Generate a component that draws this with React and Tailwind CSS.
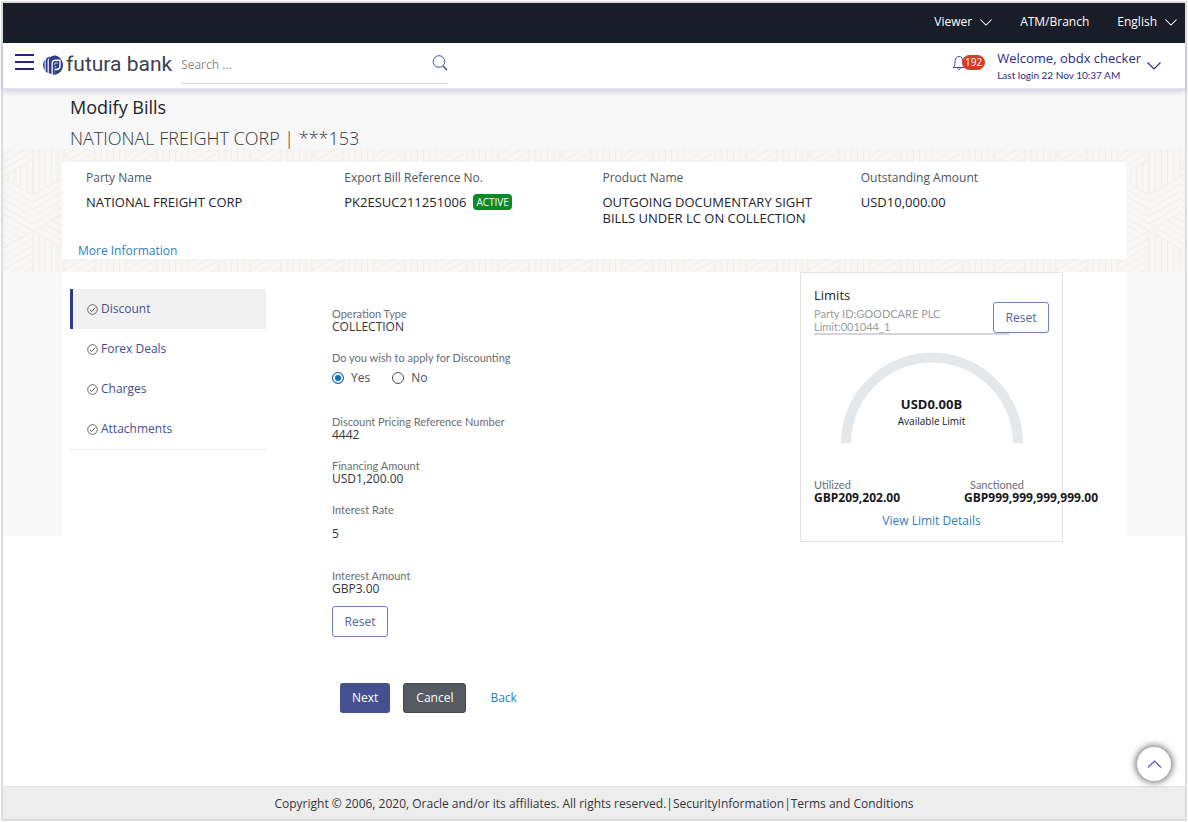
import React, { useState } from 'react';

const billFields = [
  { label: 'Party Name', value: 'NATIONAL FREIGHT CORP' },
  { label: 'Export Bill Reference No.', value: 'PK2ESUC211251006', status: 'ACTIVE' },
  { label: 'Product Name', value: 'OUTGOING DOCUMENTARY SIGHT BILLS UNDER LC ON COLLECTION' },
  { label: 'Outstanding Amount', value: 'USD10,000.00' },
];

const tabs = ['Discount', 'Forex Deals', 'Charges', 'Attachments'];

const Chevron = ({ className, up }) => (
  <svg className={className} viewBox="0 0 14 8" fill="none" stroke="currentColor" strokeWidth="1.2" aria-hidden="true">
    <path d={up ? 'M0.5 7.5 7 1l6.5 6.5' : 'M0.5 0.5 7 7l6.5-6.5'} />
  </svg>
);

const Logo = () => (
  <svg className="size-5" viewBox="0 0 20 20" aria-hidden="true">
    <path d="M1.6 4.8v10.4A10 10 0 0 1 1.6 4.8z" fill="#2c3f8f" />
    <path d="M2.6 5.4C2.6 3.600 4.200 2 6.800 1.400v1.500C5.300 3.600 4.600 4.300 4.600 5.600v12.300L2.600 16.600z" fill="#2c3f8f" />
    <path d="M5.800 5.800C5.800 2.600 8.200.4 12.400.4 17 1.400 20 5.400 20 10c0 5.200-3.600 9.300-8.600 9.900v-4.700h2.200c2.600 0 4.100-1.800 4.100-4.200V4.600h-5.200c-2.600 0-4 1.400-4 4V19l-2.700-.8z" fill="#2c3f8f" />
    <path d="M9.800 8.600c0-1.600.9-2.500 2.500-2.500h4v4.700c0 1.900-1.100 3-2.900 3h-2v5.800l-1.600.2z" fill="#2c3f8f" />
    <path d="M11.600 9.900v-.7c0-.8.400-1.200 1.200-1.200h1.800M11.600 11.800h1.600" stroke="#fff" strokeWidth="0.9" fill="none" />
  </svg>
);

// stripes of one hexagon, in three rhombi around its centre
const W = 31;
const H = 18;
const STEPS = 5;

const chevronHex = (cx, cy) => {
  let d = '';
  for (let k = 0; k <= STEPS; k++) {
    const y = cy + (k * 2 * H) / STEPS;
    d += `M${cx - W} ${y - H}L${cx} ${y}L${cx + W} ${y - H}`;
    const dx = (k * W) / STEPS;
    const dy = H * (1 - k / STEPS);
    d += `M${cx - dx} ${cy - H - dy}V${cy - H + dy}M${cx + dx} ${cy - H - dy}V${cy - H + dy}`;
  }
  return d;
};

const slantHex = (cx, cy) => {
  let d = '';
  for (let k = 0; k <= STEPS; k++) {
    const t = k / STEPS;
    d += `M${cx - W * t} ${cy - 2 * H + H * t}l${W} ${H}`;
    d += `M${cx - W * t} ${cy - H * t}v${2 * H}`;
    d += `M${cx} ${cy + 2 * H * t}l${W} ${-H}`;
  }
  return d;
};

const patternPath =
  chevronHex(30, 46) + slantHex(61, 100) + slantHex(-1, 100) + slantHex(61, -8) + slantHex(-1, -8);

const GeoPattern = () => (
  <svg className="absolute inset-0 size-full" aria-hidden="true">
    <defs>
      <pattern id="geo" width="62" height="108" patternUnits="userSpaceOnUse">
        <path d={patternPath} fill="none" stroke="#efedea" strokeWidth="1" />
      </pattern>
    </defs>
    <rect width="100%" height="100%" fill="url(#geo)" />
  </svg>
);

const TopBar = () => (
  <div className="flex h-10 items-center justify-end gap-7 bg-[#191d28] pr-2 pb-0.5 text-xs text-white">
    <button className="flex items-center gap-2">
      Viewer
      <Chevron className="h-[7px] w-3" />
    </button>
    <a href="#atm">ATM/Branch</a>
    <button className="flex items-center gap-2">
      English
      <Chevron className="h-[7px] w-3" />
    </button>
  </div>
);

const Header = () => (
  <header className="relative flex h-[46px] items-center justify-between border-b border-[#e4e2ea] bg-white pr-6 pl-3 shadow-[0_2px_6px_rgba(70,60,130,0.25)]">
    <div className="flex items-center">
      <button aria-label="Menu" className="flex w-[19px] flex-col gap-[5px] pb-2">
        <span className="h-0.5 bg-[#2b1f8c]" />
        <span className="h-0.5 bg-[#2b1f8c]" />
        <span className="h-0.5 bg-[#2b1f8c]" />
      </button>
      <a href="#home" className="ml-[9px] flex items-center gap-[3px] pb-0.5 font-['Roboto',sans-serif] text-[21px] text-[#3c4152]">
        <Logo />
        futura bank
      </a>
      <div className="ml-[9px] flex h-9 w-[267px] items-center border-b border-[#d5d5da]">
        <input
          type="search"
          aria-label="Search"
          placeholder="Search ..."
          className="w-full flex-1 text-xs outline-none placeholder:text-[#8b8b8b]"
        />
        <button aria-label="Run search" className="pb-1 text-[#4a4a9c]">
          <svg className="size-4" viewBox="0 0 16 16" fill="none" stroke="currentColor">
            <circle cx="7" cy="6.500" r="5.800" />
            <path d="M11 11l4 4" strokeWidth="1.600" />
          </svg>
        </button>
      </div>
    </div>
    <div className="flex items-center">
      <button aria-label="Notifications, 192" className="flex items-center pb-1.5 text-[#4a4a9c]">
        <svg className="h-4 w-[14px]" viewBox="0 0 14 16" fill="none" stroke="currentColor">
          <path d="M1 12.500c1.800-1.400 2-3 2-5.500C3 3.500 4.500 1.500 7 1.500S11 3.500 11 7c0 2.500.2 4.100 2 5.500zM5.500 12.500c0 2.600 3 2.600 3 0" />
        </svg>
        <span className="-ml-1 rounded-full bg-[#d93a22] px-[3px] text-[10px] leading-[15px] text-white">192</span>
      </button>
      <button className="ml-3 flex items-center gap-1.5 text-left text-[#2b2a85]">
        <span>
          <span className="block text-[13px] leading-[18px]">Welcome, obdx checker</span>
          <span className="block font-['Lato',sans-serif] text-[10px] leading-4">Last login 22 Nov 10:37 AM</span>
        </span>
        <Chevron className="h-2 w-[14px]" />
      </button>
    </div>
  </header>
);

const BillSummary = () => (
  <section className="relative bg-[#f7f6f4] py-[13px]">
    <GeoPattern />
    <div className="relative mr-[58px] ml-[59px] bg-white">
      <dl className="grid h-[81px] grid-cols-4 pt-2 pr-2 pl-6">
        {billFields.map((field) => (
          <div key={field.label}>
            <dt className="text-xs leading-4 text-[#4f5560]">{field.label}</dt>
            <dd className="mt-2 flex items-start gap-[7px] pr-10 text-[13px] leading-4 text-[#20242c]">
              {field.value}
              {field.status && (
                <span className="rounded-sm bg-[#078a27] px-[3px] text-[10px] leading-4 text-white">{field.status}</span>
              )}
            </dd>
          </div>
        ))}
      </dl>
      <a href="#more" className="ml-4 block text-xs leading-4 text-[#2a7fc0]">
        More Information
      </a>
    </div>
  </section>
);

const SideTabs = ({ active, onSelect }) => (
  <nav className="mt-[17px] w-[196px] border-b border-[#ececec]">
    {tabs.map((tab) => (
      <button
        key={tab}
        onClick={() => onSelect(tab)}
        className={`flex h-10 w-full items-center gap-[3px] border-l-[3px] pl-[14px] text-xs text-[#44508f] ${
          active === tab ? 'border-[#2f3d8c] bg-[#f1f1f1]' : 'border-transparent'
        }`}
      >
        <svg className="size-[11px] text-[#55585e]" viewBox="0 0 11 11" fill="none" stroke="currentColor" aria-hidden="true">
          <circle cx="5.500" cy="5.500" r="4.800" strokeWidth="0.900" />
          <path d="M3 5.800l1.800 1.700L8.200 3.600" />
        </svg>
        {tab}
      </button>
    ))}
  </nav>
);

const Field = ({ label, value }) => (
  <div>
    <p className="font-['Lato',sans-serif] text-[11px] leading-[13px] text-[#6b6e73]">{label}</p>
    <p className="text-xs leading-[14px] text-[#33363c]">{value}</p>
  </div>
);

const ResetButton = () => (
  <button className="h-[31px] w-14 rounded-[3px] border border-[#7580b8] bg-white text-xs text-[#5560a0]">Reset</button>
);

const DiscountForm = () => {
  const [discounting, setDiscounting] = useState('Yes');

  return (
    <form className="mt-[35px] flex-1" onSubmit={(e) => e.preventDefault()}>
      <div className="flex flex-col gap-[17px]">
        <Field label="Operation Type" value="COLLECTION" />
        <fieldset className="mb-3">
          <legend className="font-['Lato',sans-serif] text-[11px] leading-[13px] text-[#6b6e73]">
            Do you wish to apply for Discounting
          </legend>
          <div className="flex gap-[22px] pt-1.5">
            {['Yes', 'No'].map((option) => (
              <label key={option} className="flex items-center gap-[7px] text-xs leading-4 text-[#4b4e54]">
                <input
                  type="radio"
                  name="discounting"
                  value={option}
                  checked={discounting === option}
                  onChange={() => setDiscounting(option)}
                  className="size-3 appearance-none rounded-full border border-[#4b4e54] bg-white checked:border-[#0f6fc0] checked:bg-[#0f6fc0] checked:shadow-[inset_0_0_0_2px_white]"
                />
                {option}
              </label>
            ))}
          </div>
        </fieldset>
        <Field label="Discount Pricing Reference Number" value="4442" />
        <Field label="Financing Amount" value="USD1,200.00" />
      </div>
      <div className="mt-[17px]">
        <p className="font-['Lato',sans-serif] text-[11px] leading-[13px] text-[#6b6e73]">Interest Rate</p>
        <p className="mt-[11px] mb-7 text-xs leading-[14px] text-[#33363c]">5</p>
      </div>
      <Field label="Interest Amount" value="GBP3.00" />
      <div className="mt-2.5">
        <ResetButton />
      </div>
      <div className="mt-[46px] ml-2 flex items-center text-xs">
        <button className="h-[30px] rounded-[3px] bg-[#44508f] px-3 text-white">Next</button>
        <button className="ml-[13px] h-[30px] rounded-[3px] border border-[#44474f] bg-[#565a62] px-3 text-white">Cancel</button>
        <a href="#back" className="ml-6 text-[#2a7fc0]">
          Back
        </a>
      </div>
    </form>
  );
};

const LimitsCard = () => (
  <aside className="mr-16 h-[270px] w-[263px] border border-[#e3e3e3] px-[13px] pt-3.5">
    <div className="relative">
      <h2 className="text-[13px] leading-4 text-[#20242c]">Limits</h2>
      <p className="mt-1 w-[195px] border-b-2 border-[#d3d5d8] font-['Lato',sans-serif] text-[11px] leading-[13px] text-[#9a9ca0]">
        Party ID:GOODCARE PLC
        <br />
        Limit:001044_1
      </p>
      <div className="absolute top-[15px] right-0">
        <ResetButton />
      </div>
    </div>
    <div className="relative mt-[17px]">
      <svg className="mx-auto h-[92px] w-[182px]" viewBox="0 0 182 92" fill="none" aria-hidden="true">
        <path d="M5 91.500a86 86 0 0 1 172 0" stroke="#e4e8eb" strokeWidth="10" />
      </svg>
      <div className="absolute inset-x-0 bottom-[15px] text-center text-[#16181d]">
        <p className="text-[13px] leading-[18px] font-bold">USD0.00B</p>
        <p className="text-[10px] leading-4">Available Limit</p>
      </div>
    </div>
    <div className="mt-[34px] flex justify-between text-[11px] leading-[13px] text-[#6b6e73]">
      <div className="w-[150px]">
        <p className="font-['Lato',sans-serif]">Utilized</p>
        <p className="text-xs leading-[14px] font-bold text-[#16181d]">GBP209,202.00</p>
      </div>
      <div className="w-[85px]">
        <p className="pl-1.5 font-['Lato',sans-serif]">Sanctioned</p>
        <p className="text-xs leading-[14px] font-bold text-[#16181d]">GBP999,999,999,999.00</p>
      </div>
    </div>
    <a href="#limits" className="mt-2 block text-center text-xs leading-4 text-[#2a7fc0]">
      View Limit Details
    </a>
  </aside>
);

const App = () => {
  const [active, setActive] = useState('Discount');

  return (
    <div className="flex min-h-screen flex-col bg-white p-px font-['Open_Sans',sans-serif]">
      <div className="flex flex-1 flex-col border-2 border-[#dadcdd]">
        <TopBar />
        <Header />
        <div className="bg-[#f8f8f8] pt-[5px] pl-[67px]">
          <h1 className="text-lg leading-[26px] text-[#20242c]">Modify Bills</h1>
          <p className="mt-2 mb-px text-lg leading-5 font-light text-[#33363c]">NATIONAL FREIGHT CORP | ***153</p>
        </div>
        <BillSummary />
        <main className="flex-1 bg-[linear-gradient(#f8f8f8,#f8f8f8)] bg-[length:100%_264px] bg-no-repeat">
          <div className="mr-[58px] ml-[59px] flex h-full items-start bg-white pl-2">
            <SideTabs active={active} onSelect={setActive} />
            <div className="ml-[66px] flex flex-1 items-start">
              <DiscountForm />
              <LimitsCard />
            </div>
          </div>
        </main>
        <button
          aria-label="Back to top"
          className="fixed right-[17px] bottom-[41px] flex size-[34px] items-center justify-center rounded-full bg-white text-[#5a55b0] shadow-[0_0_6px_2px_rgba(0,0,0,0.5)]"
        >
          <Chevron up className="h-2 w-[15px]" />
        </button>
        <footer className="border-t border-[#e2e2e2] bg-[#ededed] pt-[9px] pb-[7px] text-center text-xs leading-4 text-[#33363c]">
          Copyright © 2006, 2020, Oracle and/or its affiliates. All rights reserved.|<a href="#security">SecurityInformation</a>|
          <a href="#terms">Terms and Conditions</a>
        </footer>
      </div>
    </div>
  );
};

export default App;
